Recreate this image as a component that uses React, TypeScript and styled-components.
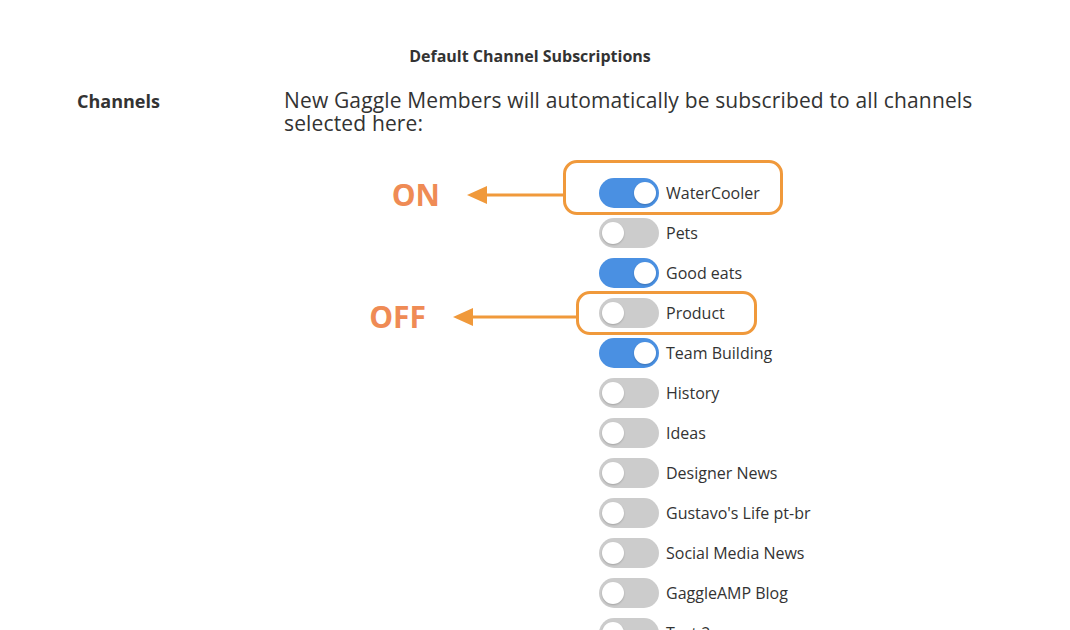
import styled, { createGlobalStyle } from "styled-components";

const GlobalStyle = createGlobalStyle`
    html, body {
        margin: 0;
        padding: 0;
        background: #ffffff;
        overflow: hidden;
    }
    body {
        font-family: "Open Sans", "Liberation Sans", sans-serif;
        color: #333333;
    }
`;

const ACCENT = "#f0993b";

type Note = {
    label: string;
    // frame around the row, relative to the toggle's top-left corner
    x: number;
    y: number;
    w: number;
    h: number;
    // where the arrow line sits inside the frame, and how long it is
    arrowTop: number;
    arrowLen: number;
};

type Channel = { name: string; on: boolean; note?: Note };

const channels: Channel[] = [
    {
        name: "WaterCooler",
        on: true,
        note: { label: "ON", x: -36, y: -18, w: 220, h: 55, arrowTop: 15, arrowLen: 96 },
    },
    { name: "Pets", on: false },
    { name: "Good eats", on: true },
    {
        name: "Product",
        on: false,
        note: { label: "OFF", x: -23, y: -7, w: 181, h: 44, arrowTop: 6, arrowLen: 123 },
    },
    { name: "Team Building", on: true },
    { name: "History", on: false },
    { name: "Ideas", on: false },
    { name: "Designer News", on: false },
    { name: "Gustavo's Life pt-br", on: false },
    { name: "Social Media News", on: false },
    { name: "GaggleAMP Blog", on: false },
    { name: "Test 2", on: false },
];

const Arrow = ({ width }: { width: number }) => (
    <svg width={width} height={20} viewBox={`0 0 ${width} 20`}>
        <line x1={18} y1={10} x2={width} y2={10} stroke={ACCENT} strokeWidth={3} />
        <polygon points="0,10 20,1 20,19" fill={ACCENT} />
    </svg>
);

const Annotation = ({ note }: { note: Note }) => (
    <Frame $x={note.x} $y={note.y} $w={note.w} $h={note.h}>
        <Pointer $top={note.arrowTop}>
            <Callout>{note.label}</Callout>
            <Arrow width={note.arrowLen} />
        </Pointer>
    </Frame>
);

const App = () => {
    return (
        <>
            <GlobalStyle />
            <Page>
                <Title>Default Channel Subscriptions</Title>
                <Section>
                    <SectionLabel>Channels</SectionLabel>
                    <Content>
                        <Description>
                            New Gaggle Members will automatically be subscribed to all channels
                            selected here:
                        </Description>
                        <ChannelList>
                            {channels.map((c) => (
                                <ChannelRow key={c.name}>
                                    <Toggle $on={c.on}>
                                        <Knob $on={c.on} />
                                    </Toggle>
                                    <ChannelName>{c.name}</ChannelName>
                                    {c.note && <Annotation note={c.note} />}
                                </ChannelRow>
                            ))}
                        </ChannelList>
                    </Content>
                </Section>
            </Page>
        </>
    );
};

const Page = styled.div`
    width: 1070px;
    height: 630px;
    overflow: hidden;
    padding-top: 45px;
    box-sizing: border-box;
`;

const Title = styled.h2`
    margin: 0;
    padding-right: 10px;
    text-align: center;
    font-size: 16px;
    font-weight: 700;
    line-height: 22px;
    color: #333333;
`;

const Section = styled.div`
    display: grid;
    grid-template-columns: 207px 1fr;
    padding-left: 77px;
    margin-top: 3px;
`;

const SectionLabel = styled.div`
    font-size: 18px;
    font-weight: 700;
    line-height: 23px;
    padding-top: 20px;
    color: #333333;
`;

const Content = styled.div`
    display: flex;
    flex-direction: column;
    padding-top: 19px;
`;

const Description = styled.p`
    margin: 0;
    max-width: 720px;
    font-size: 21px;
    letter-spacing: 0.15px;
    line-height: 23px;
    color: #333333;
`;

const ChannelList = styled.ul`
    list-style: none;
    margin: 43px 0 0 315px;
    padding: 0;
    display: flex;
    flex-direction: column;
    gap: 10px;
`;

const ChannelRow = styled.li`
    position: relative;
    display: flex;
    align-items: center;
    gap: 7px;
    height: 30px;
`;

const Toggle = styled.span<{ $on: boolean }>`
    position: relative;
    flex: none;
    width: 60px;
    height: 30px;
    border-radius: 15px;
    background: ${({ $on }) => ($on ? "#4a90e2" : "#cccccc")};
`;

const Knob = styled.span<{ $on: boolean }>`
    position: absolute;
    top: 4px;
    left: ${({ $on }) => ($on ? "35px" : "3px")};
    width: 22px;
    height: 22px;
    border-radius: 50%;
    background: #ffffff;
    box-shadow: 0 1px 2px rgba(0, 0, 0, 0.2);
`;

const ChannelName = styled.span`
    font-size: 16px;
    color: #333333;
`;

const Frame = styled.div<{ $x: number; $y: number; $w: number; $h: number }>`
    position: absolute;
    left: ${({ $x }) => $x}px;
    top: ${({ $y }) => $y}px;
    width: ${({ $w }) => $w}px;
    height: ${({ $h }) => $h}px;
    box-sizing: border-box;
    border: 3px solid ${ACCENT};
    border-radius: 14px;
`;

const Pointer = styled.div<{ $top: number }>`
    position: absolute;
    right: 100%;
    top: ${({ $top }) => $top - 3}px;
    margin-right: 3px;
    height: 40px;
    display: flex;
    align-items: center;
    gap: 27px;
`;

const Callout = styled.span`
    font-size: 30px;
    font-weight: 700;
    line-height: 40px;
    color: #ef8b55;
`;

export default App;
